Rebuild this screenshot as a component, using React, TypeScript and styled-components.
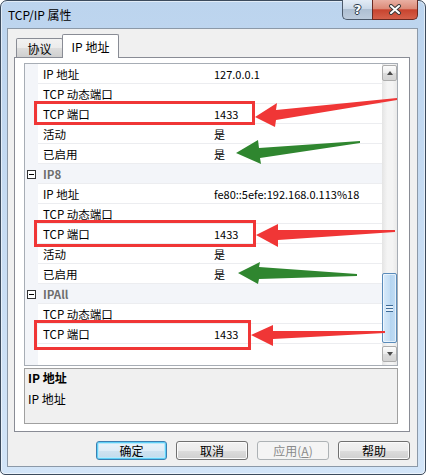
import React from "react";
import styled, { createGlobalStyle, css } from "styled-components";

const palette = {
  frameTop: "#bcd4ee",
  frameBottom: "#d3e5f8",
  frameBorder: "#3c4b5d",
  clientBorder: "#8c99a8",
  face: "#f0f0f0",
  tabBorder: "#898c95",
  gridBorder: "#a7adb5",
  gutter: "#f3f5f9",
  rowLine: "#ecedf0",
  category: "#6d6d6d",
  red: "#f03636",
  green: "#2f862f",
};

const FONT = `"Noto Sans CJK SC", "Noto Sans", sans-serif`;

type GridItem =
  | { kind: "category"; label: string }
  | { kind: "property"; label: string; value?: string };

const items: GridItem[] = [
  { kind: "property", label: "IP 地址", value: "127.0.0.1" },
  { kind: "property", label: "TCP 动态端口" },
  { kind: "property", label: "TCP 端口", value: "1433" },
  { kind: "property", label: "活动", value: "是" },
  { kind: "property", label: "已启用", value: "是" },
  { kind: "category", label: "IP8" },
  { kind: "property", label: "IP 地址", value: "fe80::5efe:192.168.0.113%18" },
  { kind: "property", label: "TCP 动态端口" },
  { kind: "property", label: "TCP 端口", value: "1433" },
  { kind: "property", label: "活动", value: "是" },
  { kind: "property", label: "已启用", value: "是" },
  { kind: "category", label: "IPAll" },
  { kind: "property", label: "TCP 动态端口" },
  { kind: "property", label: "TCP 端口", value: "1433" },
];

// callout boxes around the port rows: [x, y, w, h] of the outer edge
const boxes = [
  [34, 101, 221, 24],
  [34, 220, 222, 27],
  [34, 320, 217, 30],
];

const arrows: { color: string; points: string }[] = [
  { color: palette.red, points: "255,117 277,103 276,110 397,98 397,100 276,120 275,127" },
  { color: palette.green, points: "236,153 258,140 259,148 360,141 360,143 260,158 261,164" },
  { color: palette.red, points: "256,235 278,224 278,230 395,230 395,232 278,240 278,247" },
  { color: palette.green, points: "238,273 260,262 259,267 357,274 357,276 259,279 258,284" },
  { color: palette.red, points: "251,335 273,325 273,331 385,331 385,333 273,339 273,346" },
];

const GlobalStyle = createGlobalStyle`
  html, body {
    margin: 0;
    padding: 0;
    background: #fff;
  }
  body {
    font-family: ${FONT};
    font-size: 12px;
    color: #000;
  }
`;

function App() {
  return (
    <>
      <GlobalStyle />
      <Window>
        <TitleBar>
          <Title>TCP/IP 属性</Title>
          <CaptionButtons>
            <HelpButton>?</HelpButton>
            <CloseButton>
              <svg width="14" height="11" viewBox="0 0 14 11">
                <path d="M3 2 L11 9 M11 2 L3 9" stroke="#3b3b3b" strokeWidth="4" strokeLinecap="round" />
                <path d="M3 2 L11 9 M11 2 L3 9" stroke="#fff" strokeWidth="2" strokeLinecap="round" />
              </svg>
            </CloseButton>
          </CaptionButtons>
        </TitleBar>

        <Client>
          <TabStrip>
            <Tab>协议</Tab>
            <Tab $active>IP 地址</Tab>
          </TabStrip>

          <TabPage>
            <PropertyGrid>
              <RowsArea>
                {items.map((item, i) =>
                  item.kind === "category" ? (
                    <Row key={i}>
                      <Gutter>
                        <Expander />
                      </Gutter>
                      <CategoryCell>{item.label}</CategoryCell>
                    </Row>
                  ) : (
                    <Row key={i}>
                      <Gutter />
                      <NameCell>{item.label}</NameCell>
                      <ValueCell>{item.value}</ValueCell>
                    </Row>
                  )
                )}
              </RowsArea>
              <ScrollBar>
                <ArrowButton>
                  <ArrowGlyph $up />
                </ArrowButton>
                <Track>
                  <Thumb>
                    <Gripper />
                  </Thumb>
                </Track>
                <ArrowButton>
                  <ArrowGlyph />
                </ArrowButton>
              </ScrollBar>
            </PropertyGrid>

            <Description>
              <DescTitle>IP 地址</DescTitle>
              <DescText>IP 地址</DescText>
            </Description>
          </TabPage>

          <ButtonRow>
            <Button $default>确定</Button>
            <Button>取消</Button>
            <Button disabled>
              应用(<u>A</u>)
            </Button>
            <Button>帮助</Button>
          </ButtonRow>
        </Client>

        <Annotations width="426" height="475" viewBox="0 0 426 475">
          {boxes.map(([x, y, w, h], i) => (
            <rect
              key={i}
              x={x + 1.5}
              y={y + 1.5}
              width={w - 3}
              height={h - 3}
              fill="none"
              stroke={palette.red}
              strokeWidth="3"
            />
          ))}
          {arrows.map((a, i) => (
            <polygon key={i} points={a.points} fill={a.color} />
          ))}
        </Annotations>
      </Window>
    </>
  );
}

const Window = styled.div`
  position: relative;
  box-sizing: border-box;
  width: 426px;
  height: 475px;
  display: flex;
  flex-direction: column;
  padding: 0 7px 7px 6px;
  border: 1px solid ${palette.frameBorder};
  border-radius: 7px 7px 5px 5px;
  background: linear-gradient(${palette.frameTop}, ${palette.frameBottom});
  box-shadow: inset 0 0 0 1px rgba(255, 255, 255, 0.55);
`;

const TitleBar = styled.div`
  display: flex;
  justify-content: space-between;
  align-items: flex-start;
  height: 27px;
  flex-shrink: 0;
`;

const Title = styled.div`
  padding: 5px 0 0 1px;
  font-size: 12px;
  line-height: 17px;
  color: #000;
`;

const CaptionButtons = styled.div`
  display: flex;
  margin-top: -1px;
  height: 20px;
`;

const captionBase = css`
  box-sizing: border-box;
  height: 20px;
  display: flex;
  align-items: center;
  justify-content: center;
  border: 1px solid #4c5a6b;
  border-top: none;
`;

const HelpButton = styled.div`
  ${captionBase};
  width: 30px;
  border-right: none;
  border-radius: 0 0 0 5px;
  background: linear-gradient(#e3ecf6 0%, #cbd9e8 45%, #aebfd2 50%, #bccbdc 100%);
  color: #fff;
  font-family: "DejaVu Sans", sans-serif;
  font-weight: bold;
  font-size: 13px;
  text-shadow: 0 0 1px #2c3b4c, 1px 0 0 #2c3b4c, -1px 0 0 #2c3b4c, 0 1px 0 #2c3b4c, 0 -1px 0 #2c3b4c;
`;

const CloseButton = styled.div`
  ${captionBase};
  width: 46px;
  border-radius: 0 0 5px 0;
  border-color: #6b2a22;
  background: linear-gradient(#e9b0a3 0%, #dc8a78 45%, #c8442f 52%, #d5604a 100%);
`;

const Client = styled.div`
  flex: 1;
  display: flex;
  flex-direction: column;
  padding: 5px 7px 6px 6px;
  border: 1px solid ${palette.clientBorder};
  background: ${palette.face};
`;

const TabStrip = styled.div`
  display: flex;
  align-items: flex-end;
  height: 23px;
  padding-left: 2px;
  flex-shrink: 0;
`;

const Tab = styled.div<{ $active?: boolean }>`
  position: relative;
  box-sizing: border-box;
  display: flex;
  align-items: center;
  justify-content: center;
  border: 1px solid ${palette.tabBorder};
  border-bottom: none;
  border-radius: 2px 2px 0 0;
  font-size: 12px;
  width: 47px;
  height: 19px;
  padding-top: 1px;
  background: linear-gradient(#f2f2f2 0%, #ebebeb 50%, #dddddd 51%, #cfcfcf 100%);

  ${({ $active }) =>
    $active &&
    css`
      z-index: 1;
      width: 57px;
      height: 24px;
      margin-left: -1px;
      margin-bottom: -1px;
      padding-top: 0;
      background: #fff;
    `}
`;

const TabPage = styled.div`
  display: flex;
  flex-direction: column;
  gap: 2px;
  height: 375px;
  box-sizing: border-box;
  padding: 5px 11px 7px 9px;
  border: 1px solid ${palette.tabBorder};
  background: #fff;
`;

const PropertyGrid = styled.div`
  display: flex;
  height: 303px;
  box-sizing: border-box;
  border: 1px solid ${palette.gridBorder};
  background: #fff;
`;

const RowsArea = styled.div`
  flex: 1;
  background: linear-gradient(to right, ${palette.gutter} 13px, #fff 13px);
`;

const Row = styled.div`
  display: grid;
  grid-template-columns: 13px 175px 1fr;
  height: 20px;
`;

const Gutter = styled.div`
  display: flex;
  align-items: center;
  padding-left: 2px;
`;

const Expander = styled.div`
  position: relative;
  box-sizing: border-box;
  width: 9px;
  height: 9px;
  border: 1px solid #333;
  background: #fff;

  &::after {
    content: "";
    position: absolute;
    left: 1px;
    top: 3px;
    width: 5px;
    height: 1px;
    background: #000;
  }
`;

const cell = css`
  box-sizing: border-box;
  display: flex;
  align-items: center;
  border-bottom: 1px solid ${palette.rowLine};
  white-space: nowrap;
  overflow: hidden;
  font-size: 11.5px;
`;

const NameCell = styled.div`
  ${cell};
  padding-left: 5px;
`;

const ValueCell = styled.div`
  ${cell};
  padding-left: 1px;
  font-size: 11px;
`;

const CategoryCell = styled.div`
  ${cell};
  grid-column: 2 / 4;
  padding-left: 5px;
  background: ${palette.gutter};
  color: ${palette.category};
  font-weight: bold;
`;

const ScrollBar = styled.div`
  width: 15px;
  display: flex;
  flex-direction: column;
  padding: 1px 0 3px;
  background: linear-gradient(to right, #e4e4e4, #f4f4f4 35%, #f4f4f4 70%, #e9e9e9);
`;

const ArrowButton = styled.div`
  box-sizing: border-box;
  height: 16px;
  display: flex;
  align-items: center;
  justify-content: center;
  border: 1px solid #adadad;
  border-radius: 2px;
  background: linear-gradient(#fdfdfd, #ececec 50%, #dcdcdc 51%, #d3d3d3);
`;

const ArrowGlyph = styled.div<{ $up?: boolean }>`
  width: 0;
  height: 0;
  border-left: 3.5px solid transparent;
  border-right: 3.5px solid transparent;
  ${({ $up }) =>
    $up
      ? css`
          border-bottom: 4px solid #4a4a4a;
        `
      : css`
          border-top: 4px solid #4a4a4a;
        `}
`;

const Track = styled.div`
  flex: 1;
  display: flex;
  flex-direction: column;
  justify-content: flex-end;
  padding-bottom: 3px;
`;

const Thumb = styled.div`
  box-sizing: border-box;
  height: 70px;
  display: flex;
  align-items: center;
  justify-content: center;
  border: 1px solid #5a8bba;
  border-radius: 2px;
  background: linear-gradient(to right, #d8eafa, #c4def5 50%, #b3d4f1 51%, #c2dcf3);
  box-shadow: inset 0 0 0 1px rgba(255, 255, 255, 0.6);
`;

const Gripper = styled.div`
  width: 7px;
  height: 7px;
  background: repeating-linear-gradient(to bottom, #3f6c98 0 1px, #e6f1fb 1px 3px);
`;

const Description = styled.div`
  height: 56px;
  box-sizing: border-box;
  padding: 1px 3px;
  border: 1px solid #a0a0a0;
  background: ${palette.face};
  font-size: 12px;
  line-height: 16px;
`;

const DescTitle = styled.div`
  font-weight: bold;
`;

const DescText = styled.div`
  margin-top: 5px;
`;

const ButtonRow = styled.div`
  display: flex;
  justify-content: flex-end;
  gap: 9px;
  margin-top: 9px;
`;

const Button = styled.button<{ $default?: boolean }>`
  box-sizing: border-box;
  width: 72px;
  height: 19px;
  padding: 0;
  font-family: ${FONT};
  font-size: 12px;
  line-height: 1;
  color: #000;
  border: 1px solid #707070;
  border-radius: 3px;
  background: linear-gradient(#f2f2f2 0%, #ebebeb 50%, #dddddd 51%, #cfcfcf 100%);
  box-shadow: inset 0 0 0 1px #fbfbfb;

  u {
    text-decoration: underline;
  }

  ${({ $default }) =>
    $default &&
    css`
      width: 71px;
      border-color: #3c7fb1;
      background: linear-gradient(#e9f3fa 0%, #dfedf7 50%, #cfe3f1 51%, #c3dbec 100%);
      box-shadow: inset 0 0 0 1px #5fd0f7, inset 0 0 0 2px #b9e8fa;
    `}

  &:disabled {
    color: #8a8a8a;
    border-color: #adb2b5;
    background: #f4f4f4;
    box-shadow: none;
  }
`;

const Annotations = styled.svg`
  position: absolute;
  left: -1px;
  top: -1px;
  pointer-events: none;
`;

export default App;
